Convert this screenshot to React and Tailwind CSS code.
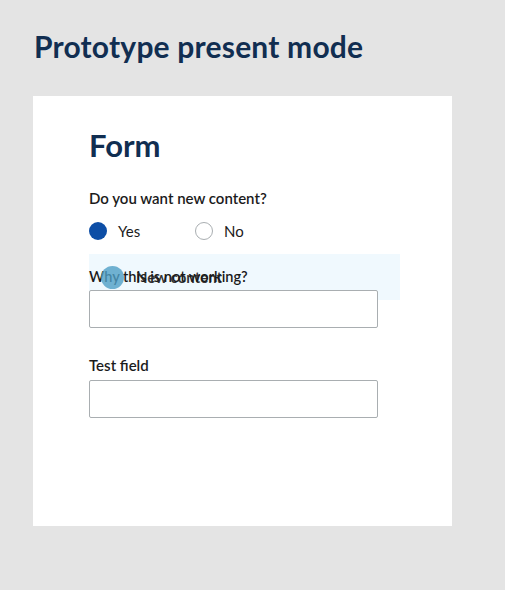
export default function App() {
  const font = { fontFamily: "'Lato', 'Liberation Sans', sans-serif" };

  return (
    <div className="min-h-[590px] bg-[#e4e4e4] pl-[33px] pt-[28px]" style={font}>
      <h1 className="text-[30px] font-bold leading-[36px] tracking-[0.2px] text-[#112e51] pl-[1px]">
        Prototype present mode
      </h1>

      <div className="mt-[32px] w-[419px] h-[430px] bg-white pl-[56px] pt-[30px]">
        <h2 className="text-[31px] font-bold leading-[38px] text-[#112e51]">Form</h2>

        <fieldset className="mt-[24px]">
          <legend className="text-[15px] font-semibold leading-[20px] text-[#1b1b1b]">
            Do you want new content?
          </legend>
          <div className="mt-[12px] flex items-center">
            <label className="flex items-center gap-[11px] w-[106px]">
              <span className="w-[18px] h-[18px] rounded-full bg-[#0d4ea6]" />
              <span className="text-[15px] text-[#1b1b1b]">Yes</span>
            </label>
            <label className="flex items-center gap-[11px]">
              <span className="w-[18px] h-[18px] rounded-full border border-[#a9aeb1] bg-white" />
              <span className="text-[15px] text-[#1b1b1b]">No</span>
            </label>
          </div>
        </fieldset>

        {/* conditional reveal, caught mid transition */}
        <div className="relative mt-[11px] w-[289px]">
          <div className="absolute left-0 top-0 w-[311px] h-[46px] bg-[#f0f9fe]" />
          <div className="relative pt-[14px]">
            <label className="block text-[14.6px] font-semibold leading-[18px] text-[#1b1b1b]">
              Why this is not working?
            </label>
            <div className="mt-[4px] h-[38px] w-[289px] rounded-[2px] border border-[#a9aeb1] bg-white" />
          </div>
          <div className="absolute left-[12px] top-[12px] flex items-center gap-[12px]">
            <span className="w-[23px] h-[23px] rounded-full bg-[#4f9fc6]/80" />
            <span className="text-[15px] font-bold text-[#1b1b1b]/90">New content</span>
          </div>
        </div>

        <div className="mt-[28px]">
          <label className="block text-[15px] font-semibold leading-[18px] text-[#1b1b1b]">
            Test field
          </label>
          <div className="mt-[6px] h-[38px] w-[289px] rounded-[2px] border border-[#a9aeb1] bg-white" />
        </div>
      </div>
    </div>
  );
}
